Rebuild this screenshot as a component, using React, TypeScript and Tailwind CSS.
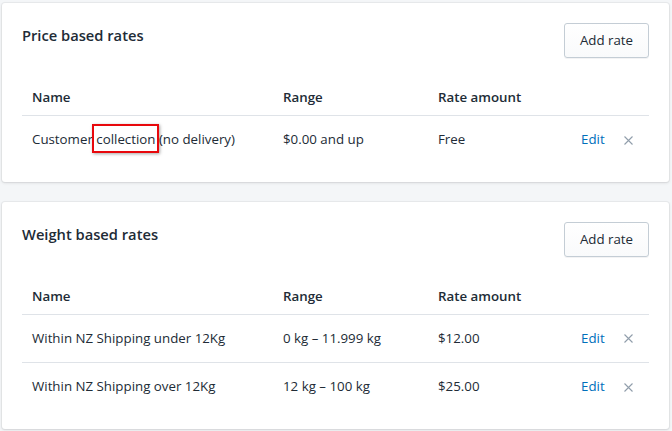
type Row = { name: string; range: string; amount: string };

const font = { fontFamily: '"Open Sans", "Noto Sans", sans-serif' };

const RateCard = ({
  title,
  rows,
  highlight,
}: {
  title: string;
  rows: Row[];
  highlight?: boolean;
}) => {
  return (
    <section className="bg-white rounded-[3px] shadow-[0_0_0_1px_rgba(63,63,68,0.05),0_1px_3px_0_rgba(63,63,68,0.15)] px-5 pt-5 pb-[18px]">
      <div className="flex items-start justify-between h-[35px]">
        <h2 className="text-[14.7px] font-semibold text-[#212b36] leading-6">{title}</h2>
        <button className="h-[35px] w-[85px] rounded-[3px] border border-[#c4cdd5] bg-gradient-to-b from-white to-[#f9fafb] text-[13.3px] text-[#212b36] shadow-[0_1px_0_0_rgba(22,29,37,0.05)]">
          Add rate
        </button>
      </div>

      <div className="mt-[29px] text-[13.3px] text-[#212b36]">
        <div className="grid grid-cols-[251px_155px_143px_1fr] pb-2 border-b border-[#dfe3e8] font-semibold leading-5">
          <div className="pl-[10px]">Name</div>
          <div className="pl-[10px]">Range</div>
          <div className="pl-[10px]">Rate amount</div>
          <div />
        </div>
        {rows.map((r, i) => (
          <div
            key={r.name}
            className={`grid grid-cols-[251px_155px_143px_1fr] items-center h-[48px] ${
              i < rows.length - 1 ? "border-b border-[#dfe3e8]" : ""
            }`}
          >
            <div className="pl-[10px]">
              {highlight ? (
                <>
                  Customer{" "}
                  <span className="relative">
                    collection
                    <span className="absolute left-[-4px] right-[-4px] top-[-6px] bottom-[-5px] border-2 border-[#e8080c] shadow-[1px_1px_3px_rgba(0,0,0,0.35)]" />
                  </span>{" "}
                  (no delivery)
                </>
              ) : (
                r.name
              )}
            </div>
            <div className="pl-[10px]">{r.range}</div>
            <div className="pl-[10px]">{r.amount}</div>
            <div className="flex items-center pl-[10px]">
              <a className="text-[#006fbb] cursor-pointer">Edit</a>
              <svg className="ml-[19px] w-[9px] h-[9px]" viewBox="0 0 9 9" fill="none">
                <path d="M0.5 0.5L8.5 8.5M8.5 0.5L0.5 8.5" stroke="#919eab" strokeWidth="1.1" />
              </svg>
            </div>
          </div>
        ))}
      </div>
    </section>
  );
};

export default function App() {
  return (
    <div className="min-h-[431px] bg-[#f4f6f8] pl-[2px] pr-[3px] pt-[3px]" style={font}>
      <div className="flex flex-col gap-5">
        <RateCard
          title="Price based rates"
          highlight
          rows={[{ name: "Customer collection (no delivery)", range: "$0.00 and up", amount: "Free" }]}
        />
        <RateCard
          title="Weight based rates"
          rows={[
            { name: "Within NZ Shipping under 12Kg", range: "0 kg – 11.999 kg", amount: "$12.00" },
            { name: "Within NZ Shipping over 12Kg", range: "12 kg – 100 kg", amount: "$25.00" },
          ]}
        />
      </div>
    </div>
  );
}
